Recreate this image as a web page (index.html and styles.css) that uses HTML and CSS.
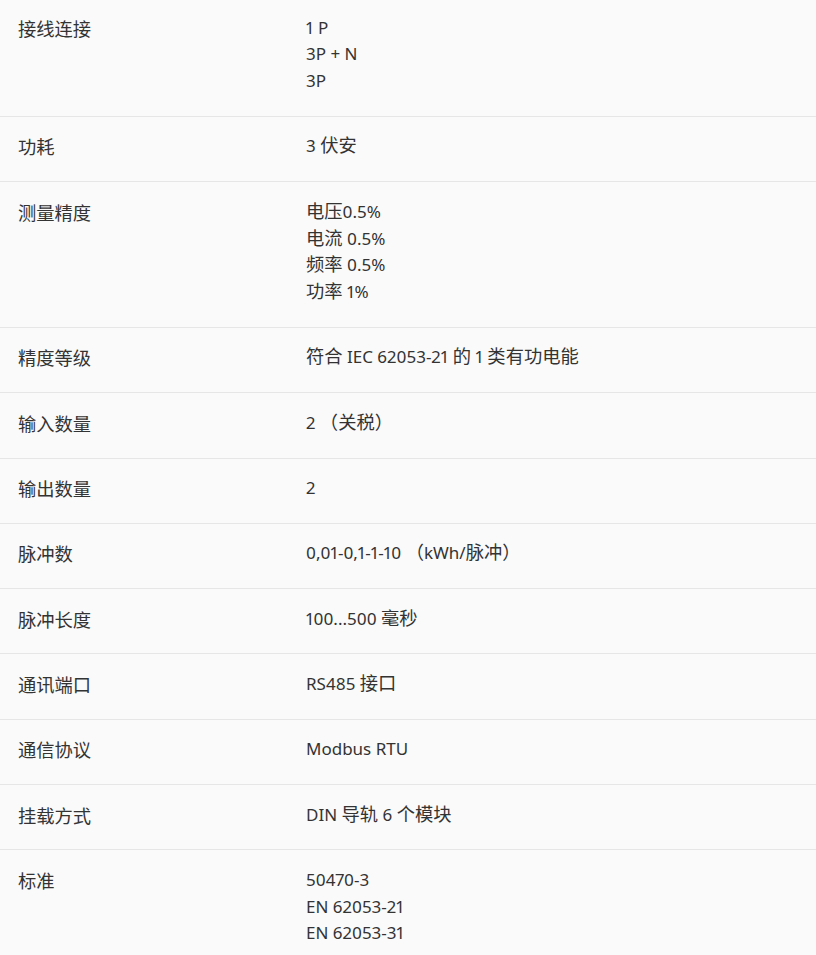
FILE: index.html
```html
<!DOCTYPE html>
<html lang="zh-CN">
<head>
<meta charset="utf-8">
<link rel="stylesheet" href="styles.css">
</head>
<body>
<div class="specs">
  <div class="row first">
    <div class="label">接线连接</div>
    <div class="value">1 P<br>3P + N<br>3P</div>
  </div>
  <div class="row">
    <div class="label">功耗</div>
    <div class="value">3 <span class="zh">伏安</span></div>
  </div>
  <div class="row">
    <div class="label">测量精度</div>
    <div class="value"><span class="zh">电压</span>0.5%<br><span class="zh">电流</span> 0.5%<br><span class="zh">频率</span> 0.5%<br><span class="zh">功率</span> 1%</div>
  </div>
  <div class="row">
    <div class="label">精度等级</div>
    <div class="value"><span class="zh">符合</span> IEC 62053-21 <span class="zh">的</span> 1 <span class="zh">类有功电能</span></div>
  </div>
  <div class="row">
    <div class="label">输入数量</div>
    <div class="value">2 <span class="zh">（关税）</span></div>
  </div>
  <div class="row">
    <div class="label">输出数量</div>
    <div class="value">2</div>
  </div>
  <div class="row">
    <div class="label">脉冲数</div>
    <div class="value">0,01-0,1-1-10 <span class="zh">（</span>kWh/<span class="zh">脉冲）</span></div>
  </div>
  <div class="row">
    <div class="label">脉冲长度</div>
    <div class="value">100...500 <span class="zh">毫秒</span></div>
  </div>
  <div class="row">
    <div class="label">通讯端口</div>
    <div class="value">RS485 <span class="zh">接口</span></div>
  </div>
  <div class="row">
    <div class="label">通信协议</div>
    <div class="value">Modbus RTU</div>
  </div>
  <div class="row">
    <div class="label">挂载方式</div>
    <div class="value">DIN <span class="zh">导轨</span> 6 <span class="zh">个模块</span></div>
  </div>
  <div class="row">
    <div class="label">标准</div>
    <div class="value">50470-3<br>EN 62053-21<br>EN 62053-31</div>
  </div>
</div>
</body>
</html>
```

FILE: styles.css
```css
html, body {
  margin: 0;
  padding: 0;
  background: #fafafa;
}
body {
  font-family: "Noto Sans", "Noto Sans CJK SC", sans-serif;
  font-size: 17px;
  line-height: 26.8px;
  color: #333333;
  font-variant-numeric: proportional-nums;
}
.specs {
  display: flex;
  flex-direction: column;
}
.row {
  display: grid;
  grid-template-columns: 306px 1fr;
  padding: 16.5px 0 21px;
  border-top: 1px solid #e6e6e6;
}
.row.first {
  border-top: none;
  padding-top: 14.6px;
}
.label {
  padding-left: 18px;
  font-family: "Noto Sans CJK SC", sans-serif;
  font-size: 18.3px;
}
.zh {
  font-family: "Noto Sans CJK SC", sans-serif;
  font-size: 18.3px;
  line-height: 16px;
}
```
